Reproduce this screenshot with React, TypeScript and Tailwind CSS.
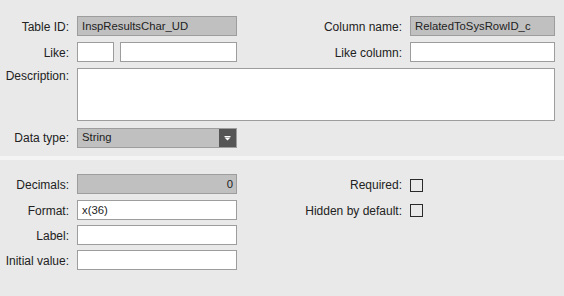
import React from "react";

const font = { fontFamily: '"Liberation Sans", Arial, sans-serif' };

function Label({ children, pt = "pt-[4px]" }: { children: React.ReactNode; pt?: string }) {
  return (
    <div className={`w-[69px] shrink-0 text-right text-[12px] leading-[14px] text-[#222] whitespace-nowrap ${pt}`}>
      {children}
    </div>
  );
}

function RLabel({ children }: { children: React.ReactNode }) {
  return (
    <div className="flex-1 text-right text-[12px] leading-[14px] text-[#222] whitespace-nowrap pt-[4px]">
      {children}
    </div>
  );
}

function Field({
  value = "",
  disabled = false,
  right = false,
  className = "",
}: {
  value?: string;
  disabled?: boolean;
  right?: boolean;
  className?: string;
}) {
  return (
    <div
      className={`h-[20px] shrink-0 border border-[#9d9d9d] pl-[4px] pr-[3px] pt-[2px] text-[11.3px] leading-[14px] text-[#222] whitespace-nowrap overflow-hidden ${
        disabled ? "bg-[#c0c0c0]" : "bg-white"
      } ${right ? "text-right" : ""} ${className}`}
    >
      {value}
    </div>
  );
}

function Check({ className = "" }: { className?: string }) {
  return <div className={`w-[13px] h-[13px] border border-[#2a2a2a] ${className}`} />;
}

export default function App() {
  return (
    <div className="w-[564px] h-[296px] bg-[#e9e9e9] overflow-hidden" style={font}>
      {/* Top section */}
      <div className="h-[156px] pt-[16px] pr-[9px] flex flex-col">
        <div className="flex h-[20px] gap-x-[8px]">
          <Label>Table ID:</Label>
          <Field value="InspResultsChar_UD" disabled className="w-[160px]" />
          <RLabel>Column name:</RLabel>
          <Field value="RelatedToSysRowID_c" disabled className="w-[145px]" />
        </div>

        <div className="flex h-[20px] gap-x-[8px] mt-[6px]">
          <Label>Like:</Label>
          <div className="flex w-[160px] gap-[6px]">
            <Field className="w-[37px]" />
            <Field className="flex-1" />
          </div>
          <RLabel>Like column:</RLabel>
          <Field className="w-[145px]" />
        </div>

        <div className="flex h-[53px] gap-x-[8px] mt-[6px]">
          <Label pt="pt-[1px]">Description:</Label>
          <div className="flex-1 h-[53px] border border-[#9d9d9d] bg-white" />
        </div>

        <div className="flex h-[20px] gap-x-[8px] mt-[7px]">
          <Label pt="pt-[3px]">Data type:</Label>
          <div className="w-[160px] h-[20px] flex border border-[#9d9d9d] bg-[#c0c0c0]">
            <div className="flex-1 pl-[4px] pt-[1px] text-[11.3px] leading-[14px] text-[#222]">String</div>
            <div className="w-[17px] h-full bg-[#555555] flex items-center justify-center">
              <svg width="7" height="5" viewBox="0 0 7 5">
                <rect x="0.5" y="0" width="6" height="1" fill="#ffffff" />
                <path d="M0.5 1.5 H6.5 L3.5 4.5 Z" fill="#ffffff" />
              </svg>
            </div>
          </div>
        </div>
      </div>

      {/* Separator stripe */}
      <div className="h-[4px] bg-[#f4f4f4]" />

      {/* Bottom section */}
      <div className="pt-[14px] pr-[9px] flex flex-col">
        <div className="flex h-[20px] gap-x-[8px]">
          <Label>Decimals:</Label>
          <Field value="0" disabled right className="w-[160px]" />
          <RLabel>Required:</RLabel>
          <div className="w-[145px]">
            <Check className="mt-[5px]" />
          </div>
        </div>

        <div className="flex h-[20px] gap-x-[8px] mt-[6px]">
          <Label>Format:</Label>
          <Field value="x(36)" className="w-[160px]" />
          <RLabel>Hidden by default:</RLabel>
          <div className="w-[145px]">
            <Check className="mt-[4px]" />
          </div>
        </div>

        <div className="flex h-[20px] gap-x-[8px] mt-[5px]">
          <Label>Label:</Label>
          <Field className="w-[160px]" />
        </div>

        <div className="flex h-[20px] gap-x-[8px] mt-[5px]">
          <Label>Initial value:</Label>
          <Field className="w-[160px]" />
        </div>
      </div>
    </div>
  );
}
